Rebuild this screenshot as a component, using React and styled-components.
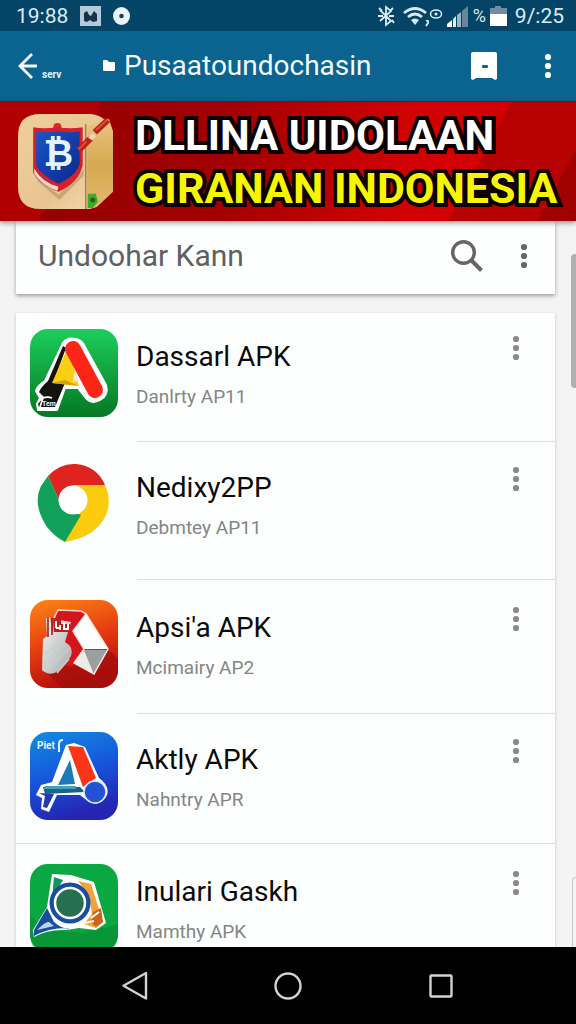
import styled, { createGlobalStyle } from 'styled-components';

const apps = [
    { name: 'Dassarl APK', detail: 'Danlrty AP11', Icon: RedLetterIcon, height: 129, top: 16 },
    { name: 'Nedixy2PP', detail: 'Debmtey AP11', Icon: WheelIcon, height: 138, top: 18 },
    { name: "Apsi'a APK", detail: 'Mcimairy AP2', Icon: HandIcon, height: 134, top: 20 },
    { name: 'Aktly APK', detail: 'Nahntry APR', Icon: BlueLetterIcon, height: 130, top: 18 },
    { name: 'Inulari Gaskh', detail: 'Mamthy APK', Icon: RingIcon, height: 134, top: 20 },
];

export default function App() {
    return (
        <Screen>
            <GlobalStyle />
            <StatusBar>
                <StatusGroup>
                    <StatusText>19:88</StatusText>
                    <svg width="21" height="20" viewBox="0 0 21 20">
                        <rect width="21" height="20" fill="#b4cad8" />
                        <path d="M4 15V7l3-2 2 4 2 1 3-5 3 3v7l-4 1-3-2-3 2z" fill="#16324a" />
                    </svg>
                    <svg width="17" height="18" viewBox="0 0 17 18">
                        <ellipse cx="8.500" cy="9" rx="8.500" ry="9" fill="#e9f4fa" />
                        <circle cx="8.500" cy="9" r="2.300" fill="#12405f" />
                    </svg>
                </StatusGroup>
                <StatusGroup $tight>
                    <StatusIcons />
                    <StatusText>9/:25</StatusText>
                </StatusGroup>
            </StatusBar>
            <AppBar>
                <IconButton aria-label="Back">
                    <svg width="20" height="26" viewBox="0 0 20 26" fill="none" stroke="#f4fbff" strokeWidth="2.800">
                        <path d="M14 1 2 13l12 12M2 13h17" />
                    </svg>
                </IconButton>
                <TinyLabel>serv</TinyLabel>
                <svg width="14" height="14" viewBox="0 0 14 14">
                    <path d="M1 2q0-1 1-1h3l2 2h5q1 0 1 1v7q0 1-1 1H2q-1 0-1-1z" fill="#fff" />
                </svg>
                <AppTitle>Pusaatoundochasin</AppTitle>
                <IconButton aria-label="Saved">
                    <svg width="28" height="30" viewBox="0 0 28 30">
                        <path d="M3 1h22q2 0 2 2v25l-2 1-3-2H6l-3 2-2-1V3q0-2 2-2z" fill="#fff" />
                        <rect x="12" y="14" width="6" height="3" rx="1" fill="#0b6390" />
                    </svg>
                </IconButton>
                <MenuButton label="More options" color="#fff" />
            </AppBar>
            <Banner>
                <ShieldIcon />
                <BannerText>
                    <BannerLine>DLLINA UIDOLAAN</BannerLine>
                    <BannerLine $yellow>GIRANAN INDONESIA</BannerLine>
                </BannerText>
            </Banner>
            <Content>
                <SearchCard>
                    <SearchInput aria-label="Search" placeholder="Undoohar Kann" />
                    <IconButton aria-label="Start search">
                        <svg width="34" height="34" viewBox="0 0 34 34" fill="none" stroke="#666" strokeWidth="3.500">
                            <circle cx="13.500" cy="13.500" r="10.800" />
                            <path d="M21 21 31.500 31.500" strokeWidth="4" />
                        </svg>
                    </IconButton>
                    <MenuButton label="Search options" color="#666" />
                </SearchCard>
                <ListCard>
                    {apps.map(({ name, detail, Icon, height, top }) => (
                        <AppRow key={name} $height={height} $top={top}>
                            <AppIcon viewBox="0 0 88 88"><Icon /></AppIcon>
                            <AppText>
                                <AppName>{name}</AppName>
                                <AppDetail>{detail}</AppDetail>
                            </AppText>
                            <MenuButton label={`Options for ${name}`} color="#8a8a8a" />
                        </AppRow>
                    ))}
                </ListCard>
                <ScrollThumb />
                <ScrollEdge />
            </Content>
            <NavBar>
                <IconButton aria-label="System back">
                    <svg width="28" height="30" viewBox="0 0 28 30" {...navStroke}>
                        <path d="M25 2v25.500L2.500 14.700z" strokeLinejoin="round" />
                    </svg>
                </IconButton>
                <IconButton aria-label="Home">
                    <svg width="30" height="30" viewBox="0 0 30 30" {...navStroke}>
                        <circle cx="15" cy="15" r="12.500" />
                    </svg>
                </IconButton>
                <IconButton aria-label="Recent apps">
                    <svg width="26" height="26" viewBox="0 0 26 26" {...navStroke}>
                        <rect x="2.500" y="2.500" width="21" height="21" rx="1" />
                    </svg>
                </IconButton>
            </NavBar>
        </Screen>
    );
}

const navStroke = { fill: 'none', stroke: '#d2d2d2', strokeWidth: 2.4 };

function MenuButton({ label, color }) {
    return (
        <IconButton aria-label={label}>
            <svg width="8" height="26" viewBox="0 0 8 26" fill={color}>
                <circle cx="4" cy="4" r="3.100" />
                <circle cx="4" cy="13" r="3.100" />
                <circle cx="4" cy="22" r="3.100" />
            </svg>
        </IconButton>
    );
}

// bluetooth, wifi, eye, signal, percent and battery
function StatusIcons() {
    return (
        <>
            <svg width="92" height="22" viewBox="0 0 92 22" fill="none" stroke="#dcebf3" strokeWidth="1.800">
                <path d="M3 5l11 11-5 4V2l5 4L3 16M1 11h5M12 11h5M2 3l3 3M16 3l-3 3M15 15l2 3" />
                <path d="M27 8q11-9 22 0M31 12q7-6 14 0" strokeWidth="2.800" />
                <path d="M34 15q4-3 8 0l-4 5z" fill="#dcebf3" stroke="none" />
                <path d="M49 16q3-1 2 2l-2 3" />
                <ellipse cx="59" cy="9" rx="5.500" ry="4" strokeWidth="1.500" />
                <circle cx="59" cy="9" r="1.500" fill="#dcebf3" stroke="none" />
                <g stroke="none">
                    <path d="M70 22v-3l5-4v7z" fill="#fff" />
                    <path d="M76 22v-8l3-3v11z" fill="#e3eef4" />
                    <path d="M80 22V10l4-3v15z" fill="#9bb6c6" />
                    <path d="M85 22V6l6-5v21z" fill="#66869c" />
                </g>
            </svg>
            <Percent>%</Percent>
            <Battery viewBox="0 0 17 20">
                <path d="M5 0h6v2h6v6H0V2h5z" fill="#6f8da2" />
                <path d="M0 8h17v12H0z" fill="#fff" />
            </Battery>
        </>
    );
}

function ShieldIcon() {
    return (
        <BannerIcon viewBox="0 0 94 94">
            <defs>
                <linearGradient id="paper" x2="1" y2="1">
                    <stop stopColor="#efcf9d" />
                    <stop offset="0.600" stopColor="#e9c491" />
                    <stop offset="1" stopColor="#f4dbb2" />
                </linearGradient>
                <linearGradient id="gold" y2="1" x2="0">
                    <stop stopColor="#e9c584" />
                    <stop offset="0.500" stopColor="#d6a850" />
                    <stop offset="1" stopColor="#e2b970" />
                </linearGradient>
                <linearGradient id="shield" x2="1" y2="1">
                    <stop stopColor="#1c55c9" />
                    <stop offset="1" stopColor="#0a278c" />
                </linearGradient>
            </defs>
            <path d="M22 0h50q9 1 14 6 8 6 8 15v54L77 92l-6 2H22Q0 94 0 72V22Q0 0 22 0z" fill="url(#paper)" />
            <path d="M69 12 90 5l4 12v60L78 92l-10 2z" fill="url(#gold)" />
            <path d="M67 10v84" stroke="#a98147" strokeWidth="1.500" />
            <path d="M17 60 40 80l25-25v6L41 85 20 67z" fill="#8e6a4a" opacity="0.350" />
            <circle cx="39" cy="13" r="4" fill="#d92a20" />
            <path d="M15 13q11 2 24 0 13 2 25 0v38q-4 17-24 26-20-8-25-19z" fill="#d3202a" />
            <path d="M18 17q10 2 21 0 12 2 22 0v32q-3 12-21 20-18-9-22-18z" fill="url(#shield)" />
            <path d="M16 54q8 14 24 18l-1 4q-16-6-23-17z" fill="#f0d7cb" />
            <ShieldMark x="40" y="51">₿</ShieldMark>
            <path d="M60 36 72 24M76 18 89 6" stroke="#b8231a" strokeWidth="6" />
            <path d="m69 23 5-4 4 3-5 4z" fill="#f2d0ba" />
            <path d="m60 35 8-8M77 16 89 5" stroke="#ed5140" strokeWidth="1.500" />
            <path d="M69 79h8l2 8-5 6h-5z" fill="#46a62a" />
            <circle cx="74" cy="85" r="2.500" fill="#1b641a" />
        </BannerIcon>
    );
}

function RedLetterIcon() {
    return (
        <>
            <defs>
                <linearGradient id="green" x2="0" y2="1">
                    <stop stopColor="#1cce5b" />
                    <stop offset="1" stopColor="#047823" />
                </linearGradient>
            </defs>
            <rect width="88" height="88" rx="18" fill="url(#green)" />
            <path
                d="M33 14q4-6 13-4 6 1 9 8l21 38q3 10-6 15-9 5-15-3l-7-9H35l-8 22H8l-1-6 3-6-4-7q1-5 9-10z"
                fill="#fff"
                stroke="#fff"
                strokeWidth="2"
                strokeLinejoin="round"
            />
            <path d="M33 17 36 19 23 54h12L25 78H9l-1-3 6-7-5-5q2-5 9-11z" fill="#15130f" />
            <path d="m37 20 5 12 7 25-27-3z" fill="#f8cf13" />
            <path d="m22 54 27 3-14-6z" fill="#d7a300" />
            <path d="M43 20 65 61" stroke="#fb2617" strokeWidth="16" strokeLinecap="round" />
            <path d="m44 43-1 10 6-1z" fill="#f5ead0" />
            <path d="M9 70q8-3 13-1M10 78l3-9" stroke="#fff" strokeWidth="1.800" fill="none" />
            <IconText x="12" y="77" $size={7}>Tem</IconText>
        </>
    );
}

function WheelIcon() {
    return (
        <>
            <path d="M18 16Q30 3 46 4q21 2 29 21L43 26 29 40z" fill="#df2420" />
            <path d="M43 25h32q7 15 1 30Q66 77 35 82l15-28z" fill="#fbcb0d" />
            <path d="M18 16 32 46l19 9-16 27Q25 77 17 67 2 44 11 26z" fill="#12a158" />
            <circle cx="43" cy="40" r="14.500" fill="#fff" />
        </>
    );
}

function HandIcon() {
    return (
        <>
            <defs>
                <linearGradient id="orange" x2="0.300" y2="1">
                    <stop stopColor="#fb8617" />
                    <stop offset="0.500" stopColor="#e94310" />
                    <stop offset="1" stopColor="#b90e0b" />
                </linearGradient>
                <linearGradient id="silver" x2="1" y2="1">
                    <stop stopColor="#f2f2f1" />
                    <stop offset="1" stopColor="#a9adaf" />
                </linearGradient>
            </defs>
            <rect width="88" height="88" rx="18" fill="url(#orange)" />
            <path d="m78 49 10 10v13q-2 15-18 16H32L16 72l28-9 20 11z" fill="#a20d0c" opacity="0.750" />
            <path d="m26 11 25-1 5 4-12 16 10 20-12 17-18-5z" fill="#d5151b" />
            <path d="m24 18 4-8 23 1 5 3" fill="none" stroke="#f7d8cd" strokeWidth="1.500" />
            <path d="m56 14 22 35H54L43 31z" fill="#fff" />
            <path d="m54 49-10 14 20 11z" fill="#ececec" />
            <path d="M54 50h24L64 74z" fill="#9b9fa0" />
            <path d="m56 14 22 35-14 25-20-11 10-14-11-18z" fill="none" stroke="#f7e8df" strokeWidth="1.500" />
            <path d="m13 39 4-3-1-18 4-1 3 18 1-16 17 3-6 20q9 5 6 14-4 7-13 15-8 6-16-1z" fill="url(#silver)" />
            <path d="m15 54 17-13M16 72l23-24M27 73l12-14" stroke="#c9cdcd" strokeWidth="1.500" />
            <path d="M18 17v20M22 18v17" stroke="#8d1a1c" strokeWidth="1.500" />
            <path d="M23 18h8v6h9v8H24z" fill="#c51a20" />
            <path d="M26 21v7M30 25v5M34 23v7M38 24v5M26 28h5M34 29h5" stroke="#fff" strokeWidth="2" />
        </>
    );
}

function BlueLetterIcon() {
    return (
        <>
            <defs>
                <linearGradient id="blue" x2="0.300" y2="1">
                    <stop stopColor="#128ddf" />
                    <stop offset="0.550" stopColor="#1755dc" />
                    <stop offset="1" stopColor="#2426b3" />
                </linearGradient>
            </defs>
            <rect width="88" height="88" rx="18" fill="url(#blue)" />
            <path
                d="m36 13 8-2 11 4 14 31q11 8 8 17-6 12-18 7l-9-7H27l-8 17-8-3 1-11-6-3 5-10 11-3z"
                fill="#fff"
                strokeLinejoin="round"
            />
            <path d="m40 28-12 25 17-1z" fill="#1d79b7" />
            <path d="m38 14 15 1 13 31-13 9z" fill="#fb341a" />
            <path d="M13 55h37l5 5-40 2z" fill="#15638f" />
            <path d="M15 54h31v3H14z" fill="#48a0b4" />
            <path d="m9 61 15 1-7 14-4-1 2-11z" fill="#203cac" />
            <circle cx="65" cy="60" r="11" fill="#2452d7" stroke="#dcecff" strokeWidth="1.500" />
            <IconText x="7" y="17" $size={10}>Piet</IconText>
            <path d="M33 8q-4 0-4 4v8" fill="none" stroke="#d8efff" strokeWidth="2" />
        </>
    );
}

function RingIcon() {
    return (
        <>
            <rect width="88" height="88" rx="18" fill="#0aa843" />
            <path d="M0 50q20 30 88 10v10q0 18-18 18H18Q0 88 0 70z" fill="#078b31" opacity="0.600" />
            <path d="m22 10 19 1 23 7 12 41-10 7-17-2-13 2q-18-1-32 7l-1-7 14-23z" fill="#fff" />
            <path d="m24 13 9 3-11 19z" fill="#12975a" />
            <path d="m48 17 13 3 12 38-7 6-12-4 8-10-3-19z" fill="#f1a238" />
            <path d="m63 48 8-4 2 14-7 5-5-5z" fill="#ce6419" />
            <path d="m61 54 8-6M55 59l9-2" stroke="#fff" strokeWidth="2" />
            <path d="m17 44 7 14q9 8 16 6-20-1-36 8v-6z" fill="#174e9d" />
            <path d="M7 66q9-9 12-8l5 4z" fill="#b8d6eb" />
            <circle cx="40" cy="39" r="18" fill="#26704f" stroke="#174e9d" strokeWidth="5" />
            <circle cx="40" cy="39" r="15" fill="none" stroke="#fff" strokeWidth="2.500" />
        </>
    );
}

const GlobalStyle = createGlobalStyle`
    * {
        box-sizing: border-box;
    }

    body {
        margin: 0;
        font-family: Roboto, "Liberation Sans", sans-serif;
    }
`;

const Screen = styled.div`
    height: 100vh;
    display: flex;
    flex-direction: column;
    background: #f4f4f4;
    overflow: hidden;
`;

const StatusBar = styled.header`
    flex: none;
    display: flex;
    align-items: center;
    justify-content: space-between;
    height: 31px;
    padding: 0 12px 0 16px;
    background: #034467;
`;

const StatusGroup = styled.div`
    display: flex;
    align-items: center;
    gap: ${({ $tight }) => ($tight ? 4 : 12)}px;
`;

const StatusText = styled.span`
    color: #dcebf3;
    font-size: 21px;
    line-height: 30px;
`;

const Percent = styled.span`
    color: #dcebf3;
    font-size: 18px;
    line-height: 30px;
`;

const Battery = styled.svg`
    width: 17px;
    height: 20px;
    margin-right: 4px;
`;

const AppBar = styled.div`
    flex: none;
    display: flex;
    align-items: center;
    height: 70px;
    padding: 0 24px 0 18px;
    background: #0b6390;
`;

const IconButton = styled.button`
    flex: none;
    display: flex;
    padding: 0;
    border: 0;
    background: none;
    cursor: pointer;
`;

const TinyLabel = styled.span`
    width: 64px;
    padding: 18px 0 0 4px;
    color: #e2f3fb;
    font-size: 10px;
    font-weight: 700;
    line-height: 12px;
`;

const AppTitle = styled.h1`
    flex: 1;
    margin: 0 0 0 8px;
    color: #f4fbff;
    font-size: 28px;
    font-weight: 400;
    line-height: 36px;

    & + button {
        margin-right: 46px;
    }
`;

const Banner = styled.section`
    flex: none;
    position: relative;
    display: flex;
    align-items: center;
    gap: 22px;
    height: 120px;
    padding: 0 18px;
    background:
        linear-gradient(118deg, #b00000 0 16%, transparent 16% 80%, #b80202 80% 94%, #a00000 94%),
        linear-gradient(100deg, #920000, #a30000 40%, #d20202 70%, #d00000);
    border-top: 1px solid #681823;
    box-shadow: 0 2px 5px rgba(0, 0, 0, 0.4);
    z-index: 1;
`;

const BannerIcon = styled.svg`
    flex: none;
    width: 95px;
    height: 95px;
`;

const ShieldMark = styled.text`
    fill: #e2f5ff;
    font-family: "DejaVu Sans", sans-serif;
    font-size: 36px;
    font-weight: 700;
    text-anchor: middle;
`;

const BannerText = styled.div`
    white-space: nowrap;
`;

const BannerLine = styled.p`
    margin: 0;
    color: ${({ $yellow }) => ($yellow ? '#f6f600' : '#fff')};
    font-size: ${({ $yellow }) => ($yellow ? 43 : 42)}px;
    font-weight: 700;
    line-height: 52px;
    -webkit-text-stroke: 8px #0b0000;
    paint-order: stroke fill;
`;

const Content = styled.main`
    flex: 1;
    position: relative;
    min-height: 0;
    padding: 0 21px 0 16px;
    overflow: hidden;
`;

const SearchCard = styled.form`
    display: flex;
    align-items: center;
    height: 73px;
    padding: 0 27px 4px 22px;
    background: #fdfefe;
    box-shadow: 0 2px 4px rgba(0, 0, 0, 0.35);
`;

const SearchInput = styled.input`
    flex: 1;
    min-width: 0;
    padding: 0;
    border: 0;
    outline: 0;
    background: none;
    color: #606060;
    font: 400 30px/36px Roboto, "Liberation Sans", sans-serif;

    &::placeholder {
        color: #606060;
        opacity: 1;
    }

    & + button {
        margin-right: 36px;
    }
`;

const ListCard = styled.ul`
    margin: 19px 0 0;
    padding: 0;
    list-style: none;
    background: #fdfefe;
    box-shadow: 0 1px 3px rgba(0, 0, 0, 0.2);
`;

const AppRow = styled.li`
    position: relative;
    display: flex;
    align-items: flex-start;
    height: ${({ $height }) => $height}px;
    padding: ${({ $top }) => $top}px 35px 0 14px;

    &:not(:first-child)::before {
        content: "";
        position: absolute;
        top: -1px;
        left: 121px;
        right: 0;
        height: 1px;
        background: #dcdfe1;
    }

    &:last-child::before {
        left: 0;
    }

    & > button {
        margin-top: 6px;
    }
`;

const AppIcon = styled.svg`
    flex: none;
    width: 88px;
    height: 88px;
`;

const IconText = styled.text`
    fill: #e8f6ff;
    font-size: ${({ $size }) => $size}px;
    font-weight: 700;
`;

const AppText = styled.div`
    flex: 1;
    padding: 12px 0 0 18px;
`;

const AppName = styled.h2`
    margin: 0 0 12px;
    color: #0a0a0a;
    font-size: 28px;
    font-weight: 400;
    line-height: 32px;
`;

const AppDetail = styled.p`
    margin: 0;
    color: #858585;
    font-size: 19px;
    line-height: 24px;
`;

const ScrollThumb = styled.div`
    position: absolute;
    top: 33px;
    right: 0;
    width: 5px;
    height: 134px;
    border-radius: 4px 0 0 4px;
    background: #aeb0b1;
`;

const ScrollEdge = styled.div`
    position: absolute;
    right: 0;
    bottom: 0;
    width: 4px;
    height: 70px;
    border: 1px solid #c5c9cb;
    border-width: 1px 0 0 1px;
    border-radius: 4px 0 0 0;
`;

const NavBar = styled.nav`
    flex: none;
    display: grid;
    grid-template-columns: repeat(3, 1fr);
    place-items: center;
    height: 77px;
    padding: 0 58px;
    background: #000;
`;
